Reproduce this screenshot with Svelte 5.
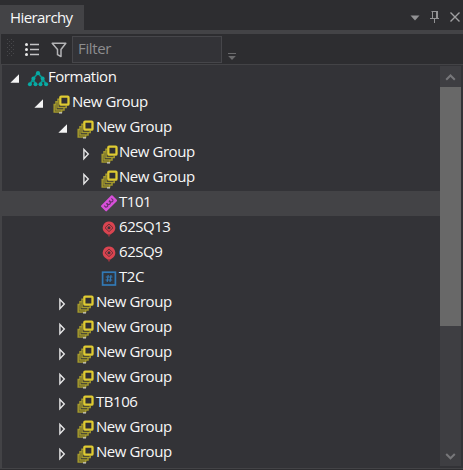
<script>
  const rows = [
    { level: 0, label: 'Formation', kind: 'formation', state: 'open' },
    { level: 1, label: 'New Group', kind: 'group', state: 'open' },
    { level: 2, label: 'New Group', kind: 'group', state: 'open' },
    { level: 3, label: 'New Group', kind: 'group', state: 'closed' },
    { level: 3, label: 'New Group', kind: 'group', state: 'closed' },
    { level: 3, label: 'T101', kind: 'ruler', selected: true },
    { level: 3, label: '62SQ13', kind: 'pin' },
    { level: 3, label: '62SQ9', kind: 'pin' },
    { level: 3, label: 'T2C', kind: 'frame' },
    { level: 2, label: 'New Group', kind: 'group', state: 'closed' },
    { level: 2, label: 'New Group', kind: 'group', state: 'closed' },
    { level: 2, label: 'New Group', kind: 'group', state: 'closed' },
    { level: 2, label: 'New Group', kind: 'group', state: 'closed' },
    { level: 2, label: 'TB106', kind: 'group', state: 'closed' },
    { level: 2, label: 'New Group', kind: 'group', state: 'closed' },
    { level: 2, label: 'New Group', kind: 'group', state: 'closed' }
  ];
</script>

<div class="panel">
  <header>
    <div class="tab">Hierarchy</div>
    <svg class="controls" width="58" height="30" viewBox="0 0 58 30">
      <path d="M5.5 15.5h9L10 20.5z" fill="#929294" />
      <path d="M26.5 11.5h6M27.5 11v8M25 18.5h9M29.5 19v4" fill="none" stroke="#929294" />
      <path d="M32 11v8" stroke="#929294" stroke-width="2" />
      <path d="M45.5 12.5l9 9M54.5 12.5l-9 9" stroke="#a0a0a2" stroke-width="1.4" />
    </svg>
  </header>
  <div class="toolbar">
    <svg class="tools" width="71" height="30" viewBox="0 0 71 30">
      <g fill="#48484b">
        {#each [0, 1, 2, 3, 4] as i}
          <rect x="6" y={5 + i * 4} width="1" height="1" />
          <rect x="10" y={5 + i * 4} width="1" height="1" />
          {#if i < 4}<rect x="8" y={7 + i * 4} width="1" height="1" /><rect x="12" y={7 + i * 4} width="1" height="1" />{/if}
        {/each}
      </g>
      <path d="M29 10.5h9M29 15.5h9M29 20.5h9" stroke="#c4c4c5" stroke-width="1.3" />
      <g fill="#e8e8e8"><circle cx="25.5" cy="10.5" r="1.5" /><circle cx="25.5" cy="15.5" r="1.5" /><circle cx="25.5" cy="20.5" r="1.5" /></g>
      <path d="M51.2 9.2h13.6L60 15.5v7l-3.5-1.8v-5.2z" fill="none" stroke="#b4b4b6" stroke-width="1.5" stroke-linejoin="round" />
    </svg>
    <div class="filter">Filter</div>
    <svg class="overflow" width="10" height="30" viewBox="0 0 10 30">
      <path d="M1 19.5h8" stroke="#6b6b6d" />
      <path d="M1.2 22h7.6L5 26z" fill="#6b6b6d" />
    </svg>
  </div>
  <div class="body">
    <div class="tree">
      {#each rows as row}
        <div class="row" class:selected={row.selected} style="padding-left:{row.level * 24 + 8}px">
          <svg class="arrow" width="16" height="25" viewBox="0 0 16 25">
            {#if row.state === 'open'}
              <path d="M9 8.2v8.6H.4z" fill="#f4f4f4" />
            {:else if row.state === 'closed'}
              <path d="M1.9 8.4v9.4l4.4-4.7z" fill="none" stroke="#e6e6e7" stroke-width="1.4" />
            {/if}
          </svg>
          <svg class="icon" width="22" height="25" viewBox="0 0 22 25">
            {#if row.kind === 'formation'}
              <g fill="none" stroke="#08958f" stroke-width="1.8">
                <path d="M11 7L6 13l-3 5.5M11 7l5 6 3 5.5M6 13l2.7 5.5M16 13l-2.7 5.5" />
              </g>
              <g fill="#08aaa4"><circle cx="11" cy="7.2" r="2.1" /><circle cx="6.4" cy="12.4" r="2" /><circle cx="15.6" cy="12.4" r="2" /><circle cx="2.9" cy="18.3" r="2" /><circle cx="8.5" cy="18.3" r="2" /><circle cx="13.5" cy="18.3" r="2" /><circle cx="19.1" cy="18.3" r="2" /></g>
            {:else if row.kind === 'group'}
              <g transform="translate(1 -.3)">
                <path d="M7.4 8.5H6v8.4h8.2V15M5.4 11H4v8.2h8V17.4M3.4 13.7H2.2v7.5h7.4V20" fill="none" stroke="#a59a2c" stroke-width="1.5" />
                <rect x="8.3" y="6" width="8.2" height="8" rx=".8" fill="#302f32" stroke="#dfcb32" stroke-width="2.3" />
                <path d="M7 22.2h3" stroke="#dedede" stroke-width="1.1" />
              </g>
            {:else if row.kind === 'ruler'}
              <g transform="translate(10 12.3) rotate(-45)">
                <rect x="-8" y="-4" width="16" height="8" rx="1" fill="#d750d9" />
                <path d="M-5-1.8v2.2q1.5 1.5 3 0v-2.2M-1.4-1.8v2.2q1.5 1.5 3 0v-2.2M2.2-1.8v2.2q1.5 1.5 3 0v-2.2" fill="none" stroke="#68306b" stroke-width="1.1" />
              </g>
            {:else if row.kind === 'pin'}
              <path d="M10 5.4a6.4 6.4 0 0 1 4.2 11.1L10 19.5l-4.2-3A6.4 6.4 0 0 1 10 5.4z" fill="#da4450" />
              <path d="M10 8l4 3.8-4 3.8-4-3.8z" fill="#da4450" stroke="#702f38" stroke-width="1" />
              <circle cx="10" cy="11.8" r="1.5" fill="#40323a" />
              <path d="M10 18v2.5" stroke="#96353f" stroke-width="1.6" />
            {:else}
              <rect x="3.6" y="6.2" width="12.8" height="12.8" fill="#30343b" stroke="#3279b5" stroke-width="1.7" />
              <path d="M9.2 9l-1 7M12 9l-1 7M6.8 11h6.7M6.5 14h6.7" stroke="#3279b5" stroke-width="1.2" />
            {/if}
          </svg>
          <span class:deep={row.level === 3}>{row.label}</span>
        </div>
      {/each}
    </div>
    <div class="scrollbar">
      <svg width="21" height="21" viewBox="0 0 21 21"><path d="M6.2 13.8l4.3-4.3 4.3 4.3" fill="none" stroke="#77777a" stroke-width="2" /></svg>
      <div class="thumb"></div>
      <svg width="21" height="21" viewBox="0 0 21 21"><path d="M6.2 9l4.3 4.3L14.8 9" fill="none" stroke="#77777a" stroke-width="2" /></svg>
    </div>
  </div>
</div>

<style>
  :global(body) { margin: 0; background: #2d2d30; }
  .panel {
    box-sizing: border-box; width: 463px; height: 470px; overflow: hidden;
    display: flex; flex-direction: column; background: #2d2d30;
    color: #f8f8f8; font: 15px/20px "Open Sans", "Noto Sans", sans-serif;
  }
  svg { display: block; flex: none; }
  header {
    box-sizing: border-box; height: 34px; flex: none; display: flex;
    justify-content: space-between; border-bottom: 4px solid #434346;
  }
  .tab {
    box-sizing: border-box; width: 84px; height: 25px; margin-top: 5px;
    padding: 2px 0 0 10px; background: #434346; letter-spacing: -.58px;
    white-space: nowrap;
  }
  .toolbar {
    box-sizing: border-box; height: 30px; flex: none; display: flex;
    border-left: 1px solid #434346;
  }
  .filter {
    box-sizing: border-box; width: 150px; height: 27px; margin-top: 2px;
    border: 1px solid #46464a; background: #333337; color: #8d8d8f;
    padding: 1px 0 0 5px; letter-spacing: -.35px;
  }
  .overflow { margin-left: 5px; }
  .body {
    box-sizing: border-box; height: 405px; display: flex;
    border: 1px solid #434346; border-right: 0; background: #333337;
    border-left-width: 2px;
  }
  .tree { flex: 1; padding-top: 1px; overflow: hidden; }
  .row { height: 25px; display: flex; }
  .row.selected { background: #434346; }
  .icon { margin-left: 1px; }
  .row span { margin-left: -1px; white-space: nowrap; letter-spacing: -.45px; }
  .row .deep { margin-left: -2px; }
  .scrollbar {
    width: 21px; height: 400px; margin: 1px 2px 0 0; background: #3e3e42;
    display: flex; flex-direction: column;
  }
  .thumb { height: 239px; background: #686868; margin-bottom: 119px; }
</style>
